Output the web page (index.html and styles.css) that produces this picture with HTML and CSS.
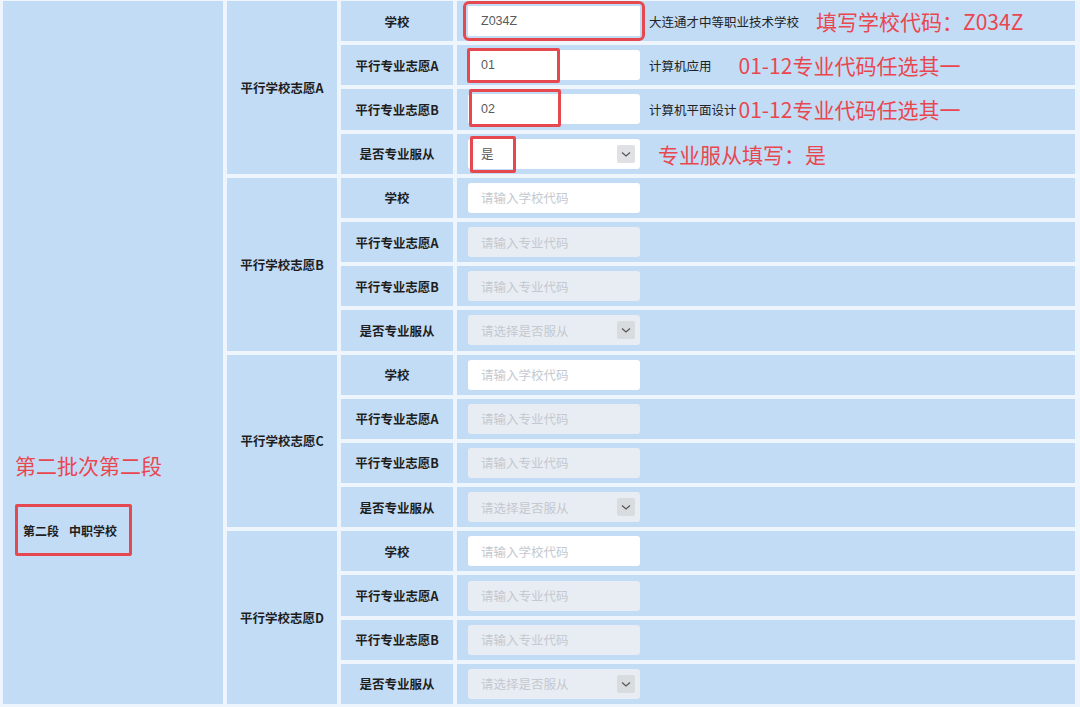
FILE: index.html
```html
<!DOCTYPE html>
<html lang="zh-CN">
<head>
<meta charset="utf-8">
<title>志愿填报</title>
<link rel="stylesheet" href="styles.css">
</head>
<body>
<div class="table">
  <div class="batch">
    <div class="note note-batch">第二批次第二段</div>
    <div class="stage">第二段<span class="sp"></span>中职学校</div>
  </div>
  <div class="groups">
    <div class="group">
      <div class="cell grp">平行学校志愿A</div>
      <div class="cell lab">学校</div>
      <div class="cell val">
        <div class="field ring"><span class="txt">Z034Z</span></div>
        <span class="side">大连通才中等职业技术学校</span>
        <span class="note n1">填写学校代码：Z034Z</span>
      </div>
      <div class="cell lab">平行专业志愿A</div>
      <div class="cell val">
        <div class="field"><span class="txt">01</span><span class="mark m2"></span></div>
        <span class="side">计算机应用</span>
        <span class="note n2">01-12专业代码任选其一</span>
      </div>
      <div class="cell lab">平行专业志愿B</div>
      <div class="cell val">
        <div class="field"><span class="txt">02</span><span class="mark m3"></span></div>
        <span class="side">计算机平面设计</span>
        <span class="note n3">01-12专业代码任选其一</span>
      </div>
      <div class="cell lab">是否专业服从</div>
      <div class="cell val">
        <div class="field select"><span class="txt">是</span><span class="arrow"><svg viewBox="0 0 18 18" width="18" height="18"><polyline points="5,7.5 9,11 13,7.5" fill="none" stroke="#555" stroke-width="1.2"/></svg></span><span class="mark m4"></span></div>
        <span class="note n4">专业服从填写：是</span>
      </div>
    </div>

    <div class="group">
      <div class="cell grp">平行学校志愿B</div>
      <div class="cell lab">学校</div>
      <div class="cell val"><div class="field"><span class="ph">请输入学校代码</span></div></div>
      <div class="cell lab">平行专业志愿A</div>
      <div class="cell val"><div class="field off"><span class="ph">请输入专业代码</span></div></div>
      <div class="cell lab">平行专业志愿B</div>
      <div class="cell val"><div class="field off"><span class="ph">请输入专业代码</span></div></div>
      <div class="cell lab">是否专业服从</div>
      <div class="cell val"><div class="field off select"><span class="ph">请选择是否服从</span><span class="arrow"><svg viewBox="0 0 18 18" width="18" height="18"><polyline points="5,7.5 9,11 13,7.5" fill="none" stroke="#555" stroke-width="1.2"/></svg></span></div></div>
    </div>

    <div class="group">
      <div class="cell grp">平行学校志愿C</div>
      <div class="cell lab">学校</div>
      <div class="cell val"><div class="field"><span class="ph">请输入学校代码</span></div></div>
      <div class="cell lab">平行专业志愿A</div>
      <div class="cell val"><div class="field off"><span class="ph">请输入专业代码</span></div></div>
      <div class="cell lab">平行专业志愿B</div>
      <div class="cell val"><div class="field off"><span class="ph">请输入专业代码</span></div></div>
      <div class="cell lab">是否专业服从</div>
      <div class="cell val"><div class="field off select"><span class="ph">请选择是否服从</span><span class="arrow"><svg viewBox="0 0 18 18" width="18" height="18"><polyline points="5,7.5 9,11 13,7.5" fill="none" stroke="#555" stroke-width="1.2"/></svg></span></div></div>
    </div>

    <div class="group">
      <div class="cell grp">平行学校志愿D</div>
      <div class="cell lab">学校</div>
      <div class="cell val"><div class="field"><span class="ph">请输入学校代码</span></div></div>
      <div class="cell lab">平行专业志愿A</div>
      <div class="cell val"><div class="field off"><span class="ph">请输入专业代码</span></div></div>
      <div class="cell lab">平行专业志愿B</div>
      <div class="cell val"><div class="field off"><span class="ph">请输入专业代码</span></div></div>
      <div class="cell lab">是否专业服从</div>
      <div class="cell val"><div class="field off select"><span class="ph">请选择是否服从</span><span class="arrow"><svg viewBox="0 0 18 18" width="18" height="18"><polyline points="5,7.5 9,11 13,7.5" fill="none" stroke="#555" stroke-width="1.2"/></svg></span></div></div>
    </div>
  </div>
</div>
</body>
</html>
```
FILE: styles.css
```css
* { box-sizing: border-box; }
html, body { margin: 0; padding: 0; }
body {
  background: #eef5fc;
  padding: 1px 0 0 3px;
  font-family: "Liberation Sans", "Noto Sans CJK SC", sans-serif;
  color: #222;
  width: 1080px;
  height: 707px;
  overflow: hidden;
}
.table {
  display: grid;
  grid-template-columns: 220px 848px;
  gap: 4px;
  height: 703px;
}
.batch {
  background: #c3dcf6;
  display: flex;
  flex-direction: column;
  justify-content: flex-end;
  align-items: flex-start;
  padding: 0 0 148px 12px;
}
.note {
  font-family: "Noto Sans CJK SC", sans-serif;
  color: #e9474f;
  font-size: 21px;
  line-height: 28px;
  white-space: nowrap;
}
.note-batch { margin-bottom: 25px; }
.stage {
  width: 117px;
  height: 52px;
  border: 3px solid #e64850;
  border-radius: 2px;
  display: flex;
  align-items: center;
  padding-left: 5px;
  font-size: 12px;
  font-weight: bold;
  color: #1e1e1e;
  font-family: "Noto Sans CJK SC", sans-serif;
}
.sp { display: inline-block; width: 10px; }
.groups {
  display: flex;
  flex-direction: column;
  gap: 4px;
}
.group {
  flex: 1;
  display: grid;
  grid-template-columns: 110px 112px 618px;
  grid-template-rows: repeat(4, 1fr);
  gap: 4px;
}
.cell {
  background: #c3dcf6;
  display: flex;
  align-items: center;
}
.grp, .lab {
  justify-content: center;
  font-family: "Noto Sans CJK SC", sans-serif;
  font-weight: bold;
  font-size: 12.5px;
  color: #1e1e1e;
}
.grp { grid-row: 1 / 5; }
.val { padding-left: 11px; }
.field {
  position: relative;
  width: 172px;
  height: 30px;
  background: #fff;
  border-radius: 3px;
  display: flex;
  align-items: center;
  padding-left: 13px;
  font-size: 12.5px;
  flex: none;
}
.field.off { background: #e8edf3; }
.txt { color: #5a5a5a; }
.ph { color: #c4c8cf; font-family: "Noto Sans CJK SC", sans-serif; font-size: 12.5px; }
.ring {
  outline: 3px solid #e64850;
  outline-offset: 2px;
  border-radius: 1px;
}
.arrow {
  position: absolute;
  right: 5px;
  top: 6px;
  width: 18px;
  height: 18px;
  background: #dfe1e4;
  border-radius: 2px;
  display: flex;
}
.off .arrow { background: #d9dcdf; }
.mark {
  position: absolute;
  border: 3px solid #e64850;
  border-radius: 2px;
}
.m2 { left: -1px; top: -2px; width: 93px; height: 35px; }
.m3 { left: 1px; top: -5px; width: 92px; height: 38px; }
.m4 { left: 2px; top: -3px; width: 46px; height: 37px; }
.side {
  margin-left: 9px;
  font-family: "Noto Sans CJK SC", sans-serif;
  font-size: 12.5px;
  color: #222;
  white-space: nowrap;
}
.n1 { margin-left: 17px; }
.n2 { margin-left: 27px; }
.n3 { margin-left: 2px; }
.n4 { margin-left: 18px; }
```
